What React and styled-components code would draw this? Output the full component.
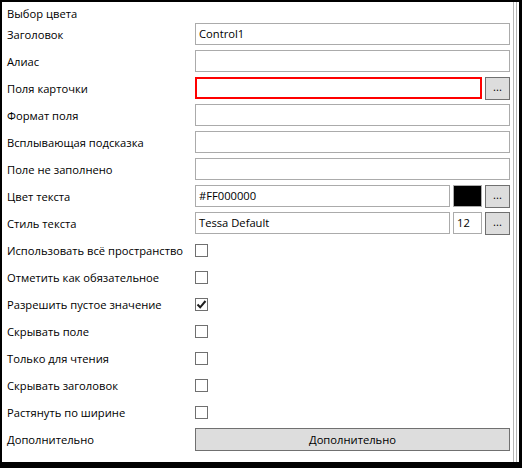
import React from "react";
import styled, { createGlobalStyle } from "styled-components";

const GlobalStyle = createGlobalStyle`
  html, body {
    margin: 0;
    padding: 0;
    background: #ffffff;
  }
  body {
    font-family: "Segoe UI", "Open Sans", "Noto Sans", sans-serif;
    font-size: 11.2px;
    color: #000;
  }
`;

const textFields = [
  { label: "Заголовок", value: "Control1" },
  { label: "Алиас", value: "" },
  { label: "Поля карточки", value: "", invalid: true, picker: true },
  { label: "Формат поля", value: "" },
  { label: "Всплывающая подсказка", value: "" },
  { label: "Поле не заполнено", value: "" },
];

const flags = [
  { label: "Использовать всё пространство", checked: false },
  { label: "Отметить как обязательное", checked: false },
  { label: "Разрешить пустое значение", checked: true },
  { label: "Скрывать поле", checked: false },
  { label: "Только для чтения", checked: false },
  { label: "Скрывать заголовок", checked: false },
  { label: "Растянуть по ширине", checked: false },
];

export default function App() {
  return (
    <>
      <GlobalStyle />
      <Window>
        <Panel>
          <Header>Выбор цвета</Header>
          <Form>
            {textFields.map((f) => (
              <React.Fragment key={f.label}>
                <Label>{f.label}</Label>
                <Field>
                  <TextBox invalid={f.invalid}>{f.value}</TextBox>
                  {f.picker && <DotsButton>...</DotsButton>}
                </Field>
              </React.Fragment>
            ))}

            <Label>Цвет текста</Label>
            <Field>
              <TextBox>#FF000000</TextBox>
              <Swatch color="#000000" />
              <DotsButton>...</DotsButton>
            </Field>

            <Label>Стиль текста</Label>
            <Field>
              <TextBox>Tessa Default</TextBox>
              <SizeBox>12</SizeBox>
              <DotsButton>...</DotsButton>
            </Field>

            {flags.map((f) => (
              <React.Fragment key={f.label}>
                <Label>{f.label}</Label>
                <Field>
                  <CheckBox>
                    {f.checked && (
                      <svg width="11" height="11" viewBox="0 0 11 11">
                        <path
                          d="M1.5 5.5 L4.2 8.3 L9.5 2"
                          fill="none"
                          stroke="#1e1e1e"
                          strokeWidth="2"
                        />
                      </svg>
                    )}
                  </CheckBox>
                </Field>
              </React.Fragment>
            ))}

            <Label>Дополнительно</Label>
            <Field>
              <WideButton>Дополнительно</WideButton>
            </Field>
          </Form>
        </Panel>
      </Window>
    </>
  );
}

const Window = styled.div`
  box-sizing: border-box;
  width: 522px;
  height: 468px;
  background: #ffffff;
  border-style: solid;
  border-color: #000000;
  border-width: 2px 3px 6px 2px;
  display: flex;
`;

const Panel = styled.div`
  box-sizing: border-box;
  flex: 1;
  margin-right: 2px;
  padding: 4px 3px 0 5px;
  border-right: 4px double #b4b4b4;
  display: flex;
  flex-direction: column;
`;

const Header = styled.div`
  height: 16px;
  line-height: 16px;
  margin-bottom: 1px;
`;

const Form = styled.div`
  display: grid;
  grid-template-columns: 188px 1fr;
  grid-auto-rows: 22px;
  row-gap: 5px;
`;

const Label = styled.div`
  display: flex;
  align-items: center;
  white-space: nowrap;
`;

const Field = styled.div`
  display: flex;
  align-items: center;
  gap: 3px;
  min-width: 0;
`;

const TextBox = styled.div`
  box-sizing: border-box;
  flex: 1;
  height: 22px;
  line-height: 20px;
  padding: 0 3px;
  background: #ffffff;
  border: 1px solid ${(p) => (p.invalid ? "#ff0000" : "#ababab")};
  box-shadow: ${(p) => (p.invalid ? "inset 0 0 0 1px #ff0000" : "none")};
  white-space: nowrap;
  overflow: hidden;
`;

const Swatch = styled.div`
  box-sizing: border-box;
  width: 29px;
  height: 22px;
  background: ${(p) => p.color};
  border: 1px solid #ababab;
`;

const SizeBox = styled.div`
  box-sizing: border-box;
  width: 29px;
  height: 22px;
  line-height: 20px;
  padding: 0 3px;
  border: 1px solid #ababab;
`;

const DotsButton = styled.div`
  box-sizing: border-box;
  width: 25px;
  height: 23px;
  background: #dddddd;
  border: 1px solid #707070;
  display: flex;
  align-items: center;
  justify-content: center;
  line-height: 1;
  padding-bottom: 2px;
`;

const CheckBox = styled.div`
  box-sizing: border-box;
  width: 13px;
  height: 13px;
  border: 1px solid #707070;
  background: #ffffff;
  display: flex;
  align-items: center;
  justify-content: center;
`;

const WideButton = styled.div`
  box-sizing: border-box;
  flex: 1;
  height: 23px;
  background: #dddddd;
  border: 1px solid #707070;
  display: flex;
  align-items: center;
  justify-content: center;
`;
